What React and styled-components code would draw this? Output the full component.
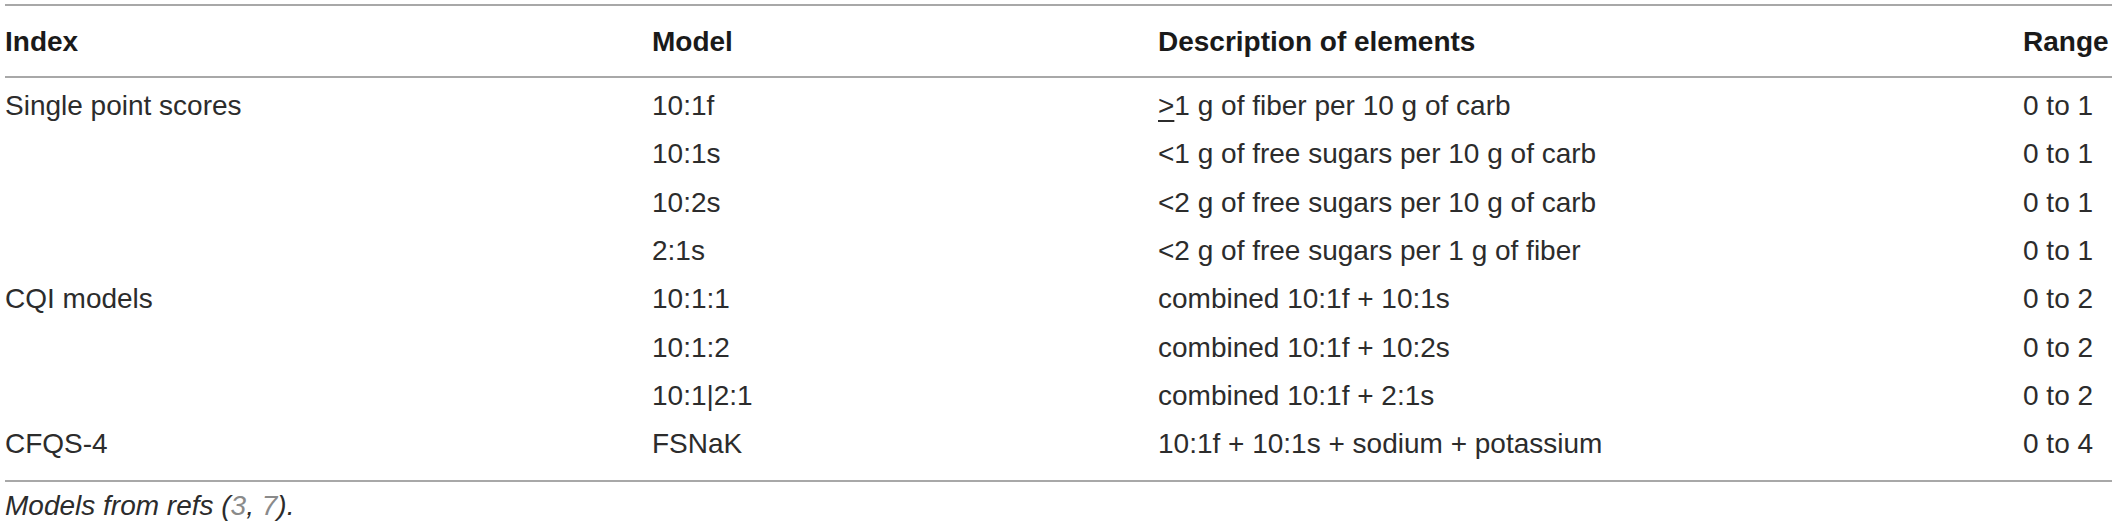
import React from 'react';
import styled, { createGlobalStyle } from 'styled-components';

const GlobalStyle = createGlobalStyle`
  html, body {
    margin: 0;
    padding: 0;
    background: #ffffff;
  }
  body {
    font-family: "Liberation Sans", Arial, Helvetica, sans-serif;
    color: #1f1f1f;
  }
`;

const Wrapper = styled.div`
  padding: 4px 5px 0 5px;
  width: 2107px;
`;

const Grid = styled.div`
  display: grid;
  grid-template-columns: 647px 506px 865px 1fr;
  border-top: 2px solid #a8a8a8;
  border-bottom: 2px solid #a8a8a8;
  padding-bottom: 12px;
`;

const HeadCell = styled.div`
  font-size: 28px;
  font-weight: 700;
  line-height: 33.6px;
  padding: 18.5px 0 18px 0;
  border-bottom: 2px solid #a8a8a8;
  margin-bottom: 4px;
  color: #1a1a1a;
  white-space: nowrap;
`;

const Cell = styled.div`
  font-size: 28px;
  line-height: 48.3px;
  height: 48.3px;
  color: #2c2c2c;
  white-space: nowrap;
`;

const Ge = styled.span`
  text-decoration: underline;
  text-decoration-thickness: 2px;
  text-underline-offset: 5px;
`;

const Caption = styled.p`
  margin: 7px 0 0 0;
  font-size: 28px;
  line-height: 33.6px;
  font-style: italic;
  color: #2c2c2c;
`;

const Ref = styled.span`
  color: #8a8a8a;
`;

const rows = [
  ['Single point scores', '10:1f', <><Ge>&gt;</Ge>1 g of fiber per 10 g of carb</>, '0 to 1'],
  ['', '10:1s', '<1 g of free sugars per 10 g of carb', '0 to 1'],
  ['', '10:2s', '<2 g of free sugars per 10 g of carb', '0 to 1'],
  ['', '2:1s', '<2 g of free sugars per 1 g of fiber', '0 to 1'],
  ['CQI models', '10:1:1', 'combined 10:1f + 10:1s', '0 to 2'],
  ['', '10:1:2', 'combined 10:1f + 10:2s', '0 to 2'],
  ['', '10:1|2:1', 'combined 10:1f + 2:1s', '0 to 2'],
  ['CFQS-4', 'FSNaK', '10:1f + 10:1s + sodium + potassium', '0 to 4'],
];

const headers = ['Index', 'Model', 'Description of elements', 'Range'];

export default function App() {
  return (
    <>
      <GlobalStyle />
      <Wrapper>
        <Grid>
          {headers.map(h => (
            <HeadCell key={h}>{h}</HeadCell>
          ))}
          {rows.map((r, i) =>
            r.map((c, j) => <Cell key={i + '-' + j}>{c}</Cell>)
          )}
        </Grid>
        <Caption>
          Models from refs (<Ref>3</Ref>, <Ref>7</Ref>).
        </Caption>
      </Wrapper>
    </>
  );
}
